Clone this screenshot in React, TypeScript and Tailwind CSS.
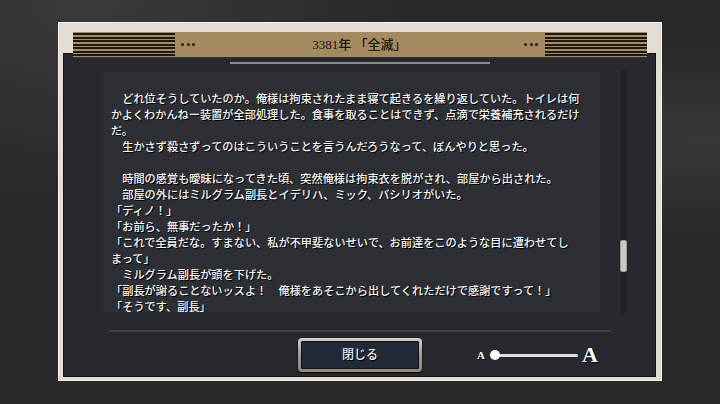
const LINES = [
  '　どれ位そうしていたのか。俺様は拘束されたまま寝て起きるを繰り返していた。トイレは何',
  'かよくわかんねー装置が全部処理した。食事を取ることはできず、点滴で栄養補充されるだけ',
  'だ。',
  '　生かさず殺さずってのはこういうことを言うんだろうなって、ぼんやりと思った。',
  '',
  '　時間の感覚も曖昧になってきた頃、突然俺様は拘束衣を脱がされ、部屋から出された。',
  '　部屋の外にはミルグラム副長とイデリハ、ミック、バシリオがいた。',
  '「ディノ！」',
  '「お前ら、無事だったか！」',
  '「これで全員だな。すまない、私が不甲斐ないせいで、お前達をこのような目に遭わせてし',
  'まって」',
  '　ミルグラム副長が頭を下げた。',
  '「副長が謝ることないッスよ！　俺様をあそこから出してくれただけで感謝ですって！」',
  '「そうです、副長」',
]

const jp = "font-['Liberation_Serif','Noto_Sans_CJK_JP',serif]"

function Stripes() {
  return (
    <div className="w-[102px] h-full bg-[repeating-linear-gradient(to_bottom,#a48a60_0px,#a48a60_1.5px,#1c1a17_1.5px,#1c1a17_3.5px)]" />
  )
}

function Dots() {
  return (
    <div className="flex items-center gap-[2.5px]">
      <span className="w-[3px] h-[3px] rounded-full bg-[#1c1a17]" />
      <span className="w-[3px] h-[3px] rounded-full bg-[#1c1a17]" />
      <span className="w-[3px] h-[3px] rounded-full bg-[#1c1a17]" />
    </div>
  )
}

export default function App() {
  return (
    <div className="w-[720px] h-[404px] overflow-hidden pt-[22px] pl-[58px] bg-[#292929] bg-[radial-gradient(ellipse_at_12%_0%,#3a3a3a_0%,transparent_35%),radial-gradient(ellipse_at_98%_35%,#383838_0%,transparent_25%)]">
      {/* Frame */}
      <div className="w-[604px] h-[359px] bg-[#e3ddd4] border border-[#f4f0ea] pl-[4px] pr-[5px] pt-[9px] pb-[3px] flex flex-col">
        {/* Header */}
        <div className="relative z-10 ml-[10px] w-[574px] h-[25px] shrink-0 bg-[#a48a60] rounded-r-[2px] flex items-center shadow-[0_1px_0_#3a342a]">
          <Stripes />
          <div className="ml-[6px]">
            <Dots />
          </div>
          <div className={`flex-1 text-center text-[13px] font-medium text-[#1a1713] ${jp}`}>3381年 「全滅」</div>
          <div className="mr-[7px]">
            <Dots />
          </div>
          <Stripes />
        </div>

        {/* Panel */}
        <div className="-mt-[4px] flex-1 bg-[#27292e] border border-[#131417] flex flex-col">
          <div className="mt-[8px] mx-auto w-[260px] h-[2px] bg-[#8c8c8c]" />

          <div className="mt-[8px] flex items-start">
            <div className={`ml-[39px] w-[497px] h-[240px] overflow-hidden bg-[#2d2f34] pt-[19px] pl-[8px] text-[11.2px] leading-[16px] font-medium text-[#f6f6f6] [text-shadow:1px_1px_0_#000] ${jp}`}>
              {LINES.map((line, i) => (
                <div key={i} className="whitespace-pre h-[16px]">{line}</div>
              ))}
            </div>
            <div className="relative ml-[21px] -mt-[2px] w-[5px] h-[243px] bg-[#1d1e21] rounded-[2px]">
              <div className="absolute top-[170px] -left-[1px] w-[7px] h-[32px] rounded-[2px] bg-[#c9c9c9] border border-[#9a9a9a]" />
            </div>
          </div>

          <div className="mt-[17px] ml-[45px] w-[502px] h-[2px] bg-[#3d434c]" />

          {/* Controls */}
          <div className="mt-[6px] flex items-center">
            <button className="ml-[234px] w-[124px] h-[34px] rounded-[4px] p-[3px] bg-[linear-gradient(to_bottom,#d6d0c3,#a29c90_50%,#8d877c)] shadow-[0_1px_2px_#000]">
              <div className={`w-full h-full bg-[#222a38] border border-[#10131a] rounded-[1px] flex items-center justify-center text-[12px] font-medium text-[#ececec] [text-shadow:1px_1px_0_#000] ${jp}`}>
                閉じる
              </div>
            </button>
            <div className="ml-[55px] flex items-center">
              <span className="text-[11px] font-bold text-white font-['Liberation_Serif',serif] [text-shadow:1px_1px_0_#000] leading-none">A</span>
              <div className="relative ml-[5px] w-[88px] h-[10px] flex items-center">
                <div className="w-full h-[3px] rounded-full bg-[#dcdcdc]" />
                <div className="absolute left-0 top-0 w-[10px] h-[10px] rounded-full bg-white" />
              </div>
              <span className="ml-[4px] text-[22px] font-bold text-white font-['Liberation_Serif',serif] [text-shadow:1px_1px_0_#000] leading-none">A</span>
            </div>
          </div>
        </div>
      </div>
    </div>
  )
}
